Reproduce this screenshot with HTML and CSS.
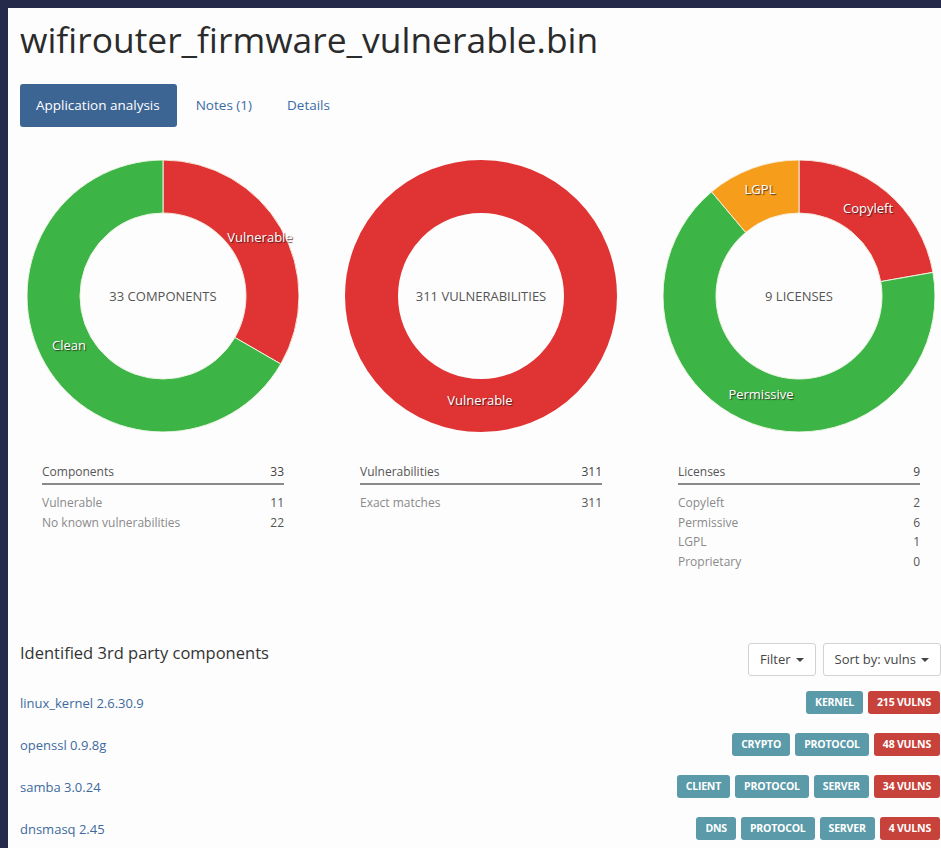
FILE: index.html
```html
<!DOCTYPE html>
<html lang="en">
<head>
<meta charset="utf-8">
<title>wifirouter_firmware_vulnerable.bin</title>
<link rel="stylesheet" href="styles.css">
</head>
<body>
<main class="page">
  <h1 class="title">wifirouter_firmware_vulnerable.bin</h1>

  <nav class="tabs">
    <a class="tab tab-active" href="#analysis">Application analysis</a>
    <a class="tab" href="#notes">Notes (1)</a>
    <a class="tab" href="#details">Details</a>
  </nav>

  <section class="summary">
    <!-- Components -->
    <div class="summary-col">
      <div class="donut">
        <svg class="donut-svg" width="272" height="272" viewBox="0 0 272 272">
          <path class="seg-red" d="M136 0 A136 136 0 0 1 253.78 204 L207.88 177.5 A83 83 0 0 0 136 53 Z"/>
          <path class="seg-green" d="M253.78 204 A136 136 0 1 1 136 0 L136 53 A83 83 0 1 0 207.88 177.5 Z"/>
        </svg>
        <span class="donut-center">33 COMPONENTS</span>
        <span class="seg-label lbl-c1-vuln">Vulnerable</span>
        <span class="seg-label lbl-c1-clean">Clean</span>
      </div>
      <table class="stats">
        <thead><tr><th>Components</th><th class="num">33</th></tr></thead>
        <tbody>
          <tr class="first"><td>Vulnerable</td><td class="num">11</td></tr>
          <tr><td>No known vulnerabilities</td><td class="num">22</td></tr>
        </tbody>
      </table>
    </div>

    <!-- Vulnerabilities -->
    <div class="summary-col">
      <div class="donut">
        <svg class="donut-svg" width="272" height="272" viewBox="0 0 272 272">
          <circle class="ring-red" cx="136" cy="136" r="109.5"/>
        </svg>
        <span class="donut-center">311 VULNERABILITIES</span>
        <span class="seg-label lbl-c2-vuln">Vulnerable</span>
      </div>
      <table class="stats">
        <thead><tr><th>Vulnerabilities</th><th class="num">311</th></tr></thead>
        <tbody>
          <tr class="first"><td>Exact matches</td><td class="num">311</td></tr>
        </tbody>
      </table>
    </div>

    <!-- Licenses -->
    <div class="summary-col">
      <div class="donut">
        <svg class="donut-svg" width="272" height="272" viewBox="0 0 272 272">
          <path class="seg-red" d="M136 0 A136 136 0 0 1 269.93 112.38 L217.74 121.59 A83 83 0 0 0 136 53 Z"/>
          <path class="seg-green" d="M269.93 112.38 A136 136 0 1 1 48.58 31.82 L82.65 72.42 A83 83 0 1 0 217.74 121.59 Z"/>
          <path class="seg-orange" d="M48.58 31.82 A136 136 0 0 1 136 0 L136 53 A83 83 0 0 0 82.65 72.42 Z"/>
        </svg>
        <span class="donut-center">9 LICENSES</span>
        <span class="seg-label lbl-c3-lgpl">LGPL</span>
        <span class="seg-label lbl-c3-copy">Copyleft</span>
        <span class="seg-label lbl-c3-perm">Permissive</span>
      </div>
      <table class="stats">
        <thead><tr><th>Licenses</th><th class="num">9</th></tr></thead>
        <tbody>
          <tr class="first"><td>Copyleft</td><td class="num">2</td></tr>
          <tr><td>Permissive</td><td class="num">6</td></tr>
          <tr><td>LGPL</td><td class="num">1</td></tr>
          <tr><td>Proprietary</td><td class="num">0</td></tr>
        </tbody>
      </table>
    </div>
  </section>

  <section class="components">
    <header class="components-head">
      <h2>Identified 3rd party components</h2>
      <div class="toolbar">
        <button class="btn" type="button">Filter <span class="caret"></span></button>
        <button class="btn" type="button">Sort by: vulns <span class="caret"></span></button>
      </div>
    </header>

    <ul class="comp-list">
      <li class="comp">
        <a href="#linux_kernel">linux_kernel 2.6.30.9</a>
        <div class="tags"><span class="tag">KERNEL</span><span class="tag tag-vuln">215 VULNS</span></div>
      </li>
      <li class="comp">
        <a href="#openssl">openssl 0.9.8g</a>
        <div class="tags"><span class="tag">CRYPTO</span><span class="tag">PROTOCOL</span><span class="tag tag-vuln">48 VULNS</span></div>
      </li>
      <li class="comp">
        <a href="#samba">samba 3.0.24</a>
        <div class="tags"><span class="tag">CLIENT</span><span class="tag">PROTOCOL</span><span class="tag">SERVER</span><span class="tag tag-vuln">34 VULNS</span></div>
      </li>
      <li class="comp">
        <a href="#dnsmasq">dnsmasq 2.45</a>
        <div class="tags"><span class="tag">DNS</span><span class="tag">PROTOCOL</span><span class="tag">SERVER</span><span class="tag tag-vuln">4 VULNS</span></div>
      </li>
    </ul>
  </section>
</main>
</body>
</html>
```

FILE: styles.css
```css
html, body {
  margin: 0;
  padding: 0;
}

body {
  background: #252a4b;
  font-family: "Open Sans", "Noto Sans", "DejaVu Sans", sans-serif;
  color: #333;
  padding: 8px 0 0 8px;
  overflow: hidden;
}

.page {
  background: #fdfdfd;
  min-height: 840px;
  padding: 0 0 0 12px;
  box-sizing: border-box;
}

.title {
  margin: 0;
  padding-top: 11px;
  font-size: 35.4px;
  font-weight: 400;
  line-height: 40px;
  color: #2b2b2b;
}

/* tab strip */
.tabs {
  display: flex;
  align-items: center;
  gap: 3px;
  margin-top: 25px;
  height: 43px;
}

.tab {
  display: block;
  padding: 0 16px;
  line-height: 43px;
  font-size: 13.5px;
  color: #3a6ca3;
  text-decoration: none;
  border-radius: 3px;
}

.tab-active {
  background: #3d6594;
  color: #fff;
  padding: 0 17px 0 16px;
}

/* donut charts + stats */
.summary {
  display: grid;
  grid-template-columns: repeat(3, 272px);
  column-gap: 46px;
  margin-top: 33px;
  margin-left: 7px;
}

.summary-col {
  display: flex;
  flex-direction: column;
}

.donut {
  position: relative;
  width: 272px;
  height: 272px;
}

.donut-svg {
  display: block;
}

.seg-red { fill: #e03434; stroke: #f4e4d8; stroke-width: 1; }
.seg-green { fill: #3db446; stroke: #e8f4e0; stroke-width: 1; }
.seg-orange { fill: #f79d1c; stroke: #f6ecd8; stroke-width: 1; }
.ring-red { fill: none; stroke: #e03434; stroke-width: 53; }

.donut-center {
  position: absolute;
  left: 0;
  right: 0;
  top: 127px;
  text-align: center;
  font-size: 13px;
  line-height: 18px;
  color: #555;
}

.seg-label {
  position: absolute;
  transform: translate(-50%, -50%);
  font-size: 13px;
  line-height: 16px;
  color: #fff;
  white-space: nowrap;
  text-shadow: 1px 1px 1px rgba(40, 20, 20, 0.75);
}

.lbl-c1-vuln { left: 233px; top: 77px; }
.lbl-c1-clean { left: 42px; top: 185px; }
.lbl-c2-vuln { left: 135px; top: 240px; }
.lbl-c3-lgpl { left: 97px; top: 29px; }
.lbl-c3-copy { left: 205px; top: 48px; }
.lbl-c3-perm { left: 98px; top: 234px; }

.stats {
  margin: 32px 15px 0;
  border-collapse: collapse;
  font-size: 12px;
}

.stats th {
  text-align: left;
  font-weight: 400;
  color: #555;
  padding: 0 0 3px;
  line-height: 16px;
  border-bottom: 2px solid #8a8a8a;
}

.stats td {
  color: #8a8a8a;
  padding: 0;
  line-height: 19.7px;
}

.stats tr.first td {
  padding-top: 8px;
}

.stats .num {
  text-align: right;
  color: #555;
}

.stats th.num {
  color: #444;
}

/* component list */
.components {
  margin-top: 71px;
}

.components-head {
  display: flex;
  align-items: flex-start;
  justify-content: space-between;
  height: 33px;
}

.components-head h2 {
  margin: 0;
  font-size: 16.5px;
  line-height: 20px;
  font-weight: 400;
  color: #333;
}

.toolbar {
  display: flex;
  gap: 7px;
}

.btn {
  font-family: inherit;
  font-size: 13px;
  color: #444;
  background: #fff;
  border: 1px solid #d2d2d2;
  border-radius: 3px;
  height: 33px;
  padding: 0 11px;
  display: flex;
  align-items: center;
  gap: 5px;
}

.caret {
  display: inline-block;
  width: 0;
  height: 0;
  border-left: 4px solid transparent;
  border-right: 4px solid transparent;
  border-top: 4px solid #444;
  margin-top: 1px;
}

.comp-list {
  list-style: none;
  margin: 6px 0 0;
  padding: 0;
}

.comp {
  display: flex;
  align-items: center;
  justify-content: space-between;
  height: 42px;
}

.comp a {
  font-size: 13px;
  color: #3d6a9e;
  text-decoration: none;
}

.tags {
  display: flex;
  gap: 5px;
  margin-right: 1px;
}

.tag {
  display: block;
  background: #5a9aa9;
  color: #fff;
  font-size: 10.5px;
  font-weight: 700;
  line-height: 23px;
  padding: 0 9px;
  border-radius: 3px;
  letter-spacing: -0.2px;
}

.tag-vuln {
  background: #c7423a;
}
```
